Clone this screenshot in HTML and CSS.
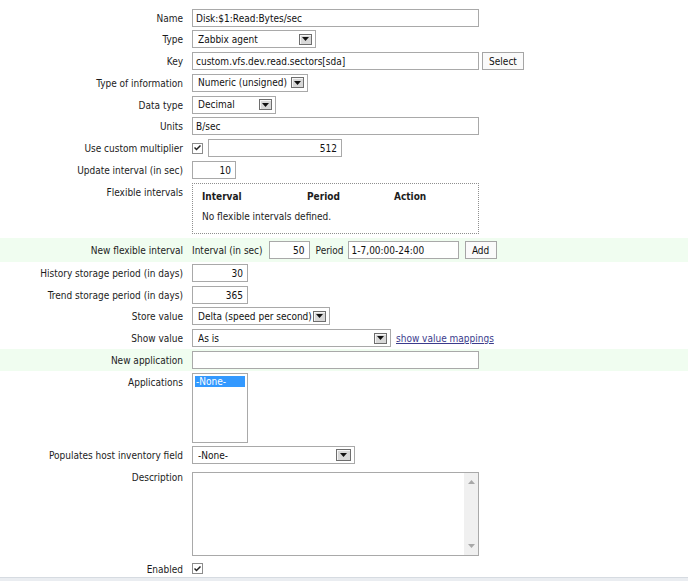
FILE: index.html
```html
<!DOCTYPE html>
<html>
<head>
<meta charset="utf-8">
<title>Item</title>
<link rel="stylesheet" href="styles.css">
</head>
<body>
<div class="form">
  <div class="row">
    <div class="lbl">Name</div>
    <div class="fld"><input class="text w287" type="text" value="Disk:$1:Read:Bytes/sec"></div>
  </div>
  <div class="row">
    <div class="lbl">Type</div>
    <div class="fld"><span class="select w124"><span class="val">Zabbix agent</span><span class="drop"><svg width="7" height="4" viewBox="0 0 7 4"><path d="M0 0H7L3.5 4Z"/></svg></span></span></div>
  </div>
  <div class="row">
    <div class="lbl">Key</div>
    <div class="fld gap3"><input class="text w287" type="text" value="custom.vfs.dev.read.sectors[sda]"><button class="btn w42">Select</button></div>
  </div>
  <div class="row">
    <div class="lbl">Type of information</div>
    <div class="fld"><span class="select w116"><span class="val">Numeric (unsigned)</span><span class="drop"><svg width="7" height="4" viewBox="0 0 7 4"><path d="M0 0H7L3.5 4Z"/></svg></span></span></div>
  </div>
  <div class="row">
    <div class="lbl">Data type</div>
    <div class="fld"><span class="select w84"><span class="val">Decimal</span><span class="drop"><svg width="7" height="4" viewBox="0 0 7 4"><path d="M0 0H7L3.5 4Z"/></svg></span></span></div>
  </div>
  <div class="row">
    <div class="lbl">Units</div>
    <div class="fld"><input class="text w287" type="text" value="B/sec"></div>
  </div>
  <div class="row">
    <div class="lbl">Use custom multiplier</div>
    <div class="fld gap5 center"><span class="check"><svg width="7" height="6" viewBox="0 0 7 6"><path d="M0.5 2.5L2.5 4.5L6.5 0.5" fill="none" stroke="#222" stroke-width="1.5"/></svg></span><input class="text num w134" type="text" value="512"></div>
  </div>
  <div class="row">
    <div class="lbl">Update interval (in sec)</div>
    <div class="fld"><input class="text num w44" type="text" value="10"></div>
  </div>
  <div class="row row-flex">
    <div class="lbl">Flexible intervals</div>
    <div class="fld">
      <div class="flexbox">
        <div class="fb-head"><span class="c1">Interval</span><span class="c2">Period</span><span class="c3">Action</span></div>
        <div class="fb-empty">No flexible intervals defined.</div>
      </div>
    </div>
  </div>
  <div class="row green row-newflex">
    <div class="lbl">New flexible interval</div>
    <div class="fld center">
      <span class="inl">Interval (in sec)</span>
      <input class="text num w41 ml6" type="text" value="50">
      <span class="inl ml6">Period</span>
      <input class="text w111 ml4" type="text" value="1-7,00:00-24:00">
      <button class="btn w32 ml6">Add</button>
    </div>
  </div>
  <div class="row">
    <div class="lbl">History storage period (in days)</div>
    <div class="fld"><input class="text num w56" type="text" value="30"></div>
  </div>
  <div class="row">
    <div class="lbl">Trend storage period (in days)</div>
    <div class="fld"><input class="text num w56" type="text" value="365"></div>
  </div>
  <div class="row">
    <div class="lbl">Store value</div>
    <div class="fld"><span class="select w138"><span class="val">Delta (speed per second)</span><span class="drop"><svg width="7" height="4" viewBox="0 0 7 4"><path d="M0 0H7L3.5 4Z"/></svg></span></span></div>
  </div>
  <div class="row">
    <div class="lbl">Show value</div>
    <div class="fld center"><span class="select w199"><span class="val">As is</span><span class="drop"><svg width="7" height="4" viewBox="0 0 7 4"><path d="M0 0H7L3.5 4Z"/></svg></span></span><a class="link ml5" href="#">show value mappings</a></div>
  </div>
  <div class="row green">
    <div class="lbl">New application</div>
    <div class="fld"><input class="text w287" type="text" value=""></div>
  </div>
  <div class="row">
    <div class="lbl">Applications</div>
    <div class="fld"><div class="listbox"><div class="opt-sel">-None-</div></div></div>
  </div>
  <div class="row">
    <div class="lbl">Populates host inventory field</div>
    <div class="fld"><span class="select w163"><span class="val">-None-</span><span class="drop big"><svg width="7" height="4" viewBox="0 0 7 4"><path d="M0 0H7L3.5 4Z"/></svg></span></span></div>
  </div>
  <div class="row row-desc">
    <div class="lbl">Description</div>
    <div class="fld">
      <div class="textarea">
        <div class="ta-body"></div>
        <div class="ta-scroll">
          <svg width="7" height="4" viewBox="0 0 7 4"><path d="M0 4H7L3.5 0Z" fill="#a8a8a8"/></svg>
          <svg width="7" height="4" viewBox="0 0 7 4"><path d="M0 0H7L3.5 4Z" fill="#a8a8a8"/></svg>
        </div>
      </div>
    </div>
  </div>
  <div class="row row-enabled">
    <div class="lbl">Enabled</div>
    <div class="fld center"><span class="check"><svg width="7" height="6" viewBox="0 0 7 6"><path d="M0.5 2.5L2.5 4.5L6.5 0.5" fill="none" stroke="#222" stroke-width="1.5"/></svg></span></div>
  </div>
</div>
<div class="footer"></div>
</body>
</html>
```

FILE: styles.css
```css
* { box-sizing: border-box; }
html, body { margin: 0; padding: 0; background: #fff; }
body {
  font-family: "DejaVu Sans Condensed", "DejaVu Sans", sans-serif;
  font-size: 10px;
  color: #1c1c1c;
  overflow: hidden;
}
.form { padding-top: 6.625px; }
.row {
  display: grid;
  grid-template-columns: 183px 1fr;
  column-gap: 9px;
  padding: 1.875px 0;
}
.lbl { text-align: right; line-height: 16px; padding-top: 2px; white-space: nowrap; }
.fld { display: flex; align-items: flex-start; min-height: 18px; }
.fld.center { align-items: center; }
.gap3 { gap: 3px; }
.gap5 { gap: 5px; }
.inl { line-height: 16px; white-space: nowrap; padding-top: 2px; }

.text {
  height: 18px;
  border: 1px solid #a9a9a9;
  padding: 1px 3px 0;
  font: inherit;
  color: #111;
  background: #fff;
  outline: none;
  margin: 0;
}
.num { text-align: right; padding-right: 4px; }
.w41 { width: 41px; }
.w44 { width: 44px; }
.w56 { width: 56px; }
.w84 { width: 84px; }
.w111 { width: 111px; }
.w116 { width: 116px; }
.w124 { width: 124px; }
.w134 { width: 134px; }
.w138 { width: 138px; }
.w163 { width: 163px; }
.w199 { width: 199px; }
.w287 { width: 287px; }
.w32 { width: 32px; }
.w42 { width: 42px; }

.select {
  display: inline-flex;
  align-items: center;
  height: 18px;
  border: 1px solid #a9a9a9;
  padding: 0 3px 0 5px;
  background: #fff;
  color: #111;
  white-space: nowrap;
}
.select .val { flex: 1; overflow: hidden; line-height: 14px; padding-top: 1px; }
.drop {
  width: 13px;
  height: 11px;
  border: 1px solid #6e6e6e;
  box-shadow: inset 1px 1px 0 #f6f6f6;
  background: #d8d8d8;
  display: flex;
  align-items: center;
  justify-content: center;
  flex: none;
}
.drop.big { width: 15px; height: 12px; }
.drop svg { fill: #111; display: block; }

.btn {
  height: 18px;
  border: 1px solid #a5a5a5;
  background: #fafafa;
  font: inherit;
  color: #111;
  padding: 1px 0 0;
  margin: 0;
  text-align: center;
}

.ml4 { margin-left: 4px; }
.ml5 { margin-left: 5px; }
.ml6 { margin-left: 6px; }

.check {
  width: 11px;
  height: 11px;
  border: 1px solid #8c8c8c;
  background: #fff;
  display: inline-flex;
  align-items: center;
  justify-content: center;
  flex: none;
}
.check svg { display: block; }

.row-flex { padding-bottom: 4.5px; }
.flexbox {
  width: 287px;
  height: 51px;
  border: 1px dotted #8f8f8f;
  padding: 4px 0 0 9px;
}
.fb-head { display: flex; font-weight: bold; line-height: 18px; }
.fb-head .c1 { width: 105px; }
.fb-head .c2 { width: 87px; }
.fb-empty { line-height: 18px; margin-top: 2px; }

.green { background: #f0fdf0; }
.row-newflex { padding: 3px 0 3px; }

.link { color: #3b3b8c; text-decoration: underline; white-space: nowrap; line-height: 16px; padding-top: 2px; }

.listbox {
  width: 56px;
  height: 70px;
  border: 1px solid #a9a9a9;
  padding: 2px;
  background: #fff;
}
.opt-sel {
  background: #3399ff;
  color: #fff;
  height: 11px;
  line-height: 11px;
  padding-left: 1px;
}

.row-desc .fld { padding-top: 4px; }
.textarea {
  width: 287px;
  height: 84px;
  border: 1px solid #a9a9a9;
  display: flex;
  background: #fff;
}
.ta-body { flex: 1; }
.ta-scroll {
  width: 14px;
  background: #f0f0f0;
  display: flex;
  flex-direction: column;
  justify-content: space-between;
  align-items: center;
  padding: 7px 0 7px;
}
.ta-scroll svg { display: block; }

.row-enabled { padding: 2.5px 0 0; }
.row-enabled .lbl { line-height: 14px; }
.row-enabled .fld { min-height: 16px; }

.footer {
  height: 6px;
  background: #eaedf1;
  border-top: 1px solid #d6dbe1;
}
```
